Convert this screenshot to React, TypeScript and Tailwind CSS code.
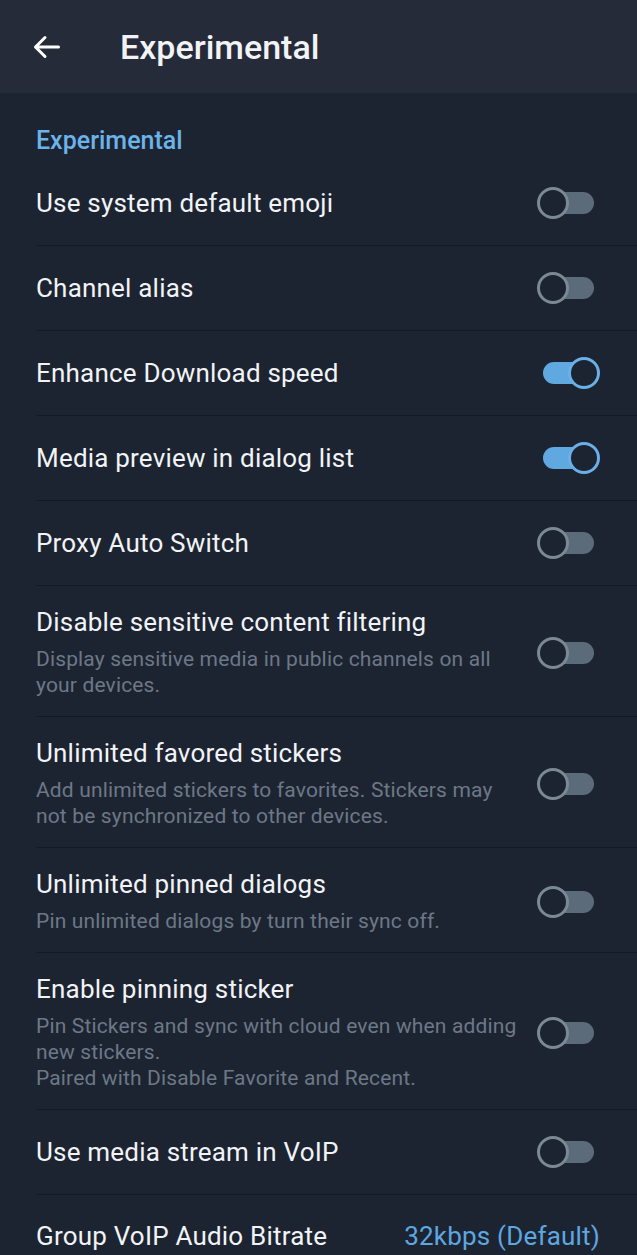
import React, { useState } from 'react';

type Item = {
  title: string;
  sub?: string[];
  on?: boolean;
};

// subtitle lines are kept as the app wraps them
const ITEMS: Item[] = [
  { title: "Use system default emoji" },
  { title: "Channel alias" },
  { title: "Enhance Download speed", on: true },
  { title: "Media preview in dialog list", on: true },
  { title: "Proxy Auto Switch" },
  {
    title: "Disable sensitive content filtering",
    sub: ["Display sensitive media in public channels on all", "your devices."],
  },
  {
    title: "Unlimited favored stickers",
    sub: ["Add unlimited stickers to favorites. Stickers may", "not be synchronized to other devices."],
  },
  {
    title: "Unlimited pinned dialogs",
    sub: ["Pin unlimited dialogs by turn their sync off."],
  },
  {
    title: "Enable pinning sticker",
    sub: [
      "Pin Stickers and sync with cloud even when adding",
      "new stickers.",
      "Paired with Disable Favorite and Recent.",
    ],
  },
  { title: "Use media stream in VoIP" },
];

function Toggle({ on, onClick }: { on: boolean; onClick: () => void }) {
  return (
    <button onClick={onClick} className="relative w-[63px] h-[32px] shrink-0">
      {on ? (
        <>
          <span className="absolute left-[6px] top-[5px] w-[46px] h-[22px] rounded-full bg-[#5fa8e0]" />
          <span className="absolute left-[31px] top-0 w-[32px] h-[32px] rounded-full border-[3px] border-[#6ab0e8] bg-[#1d2431]" />
        </>
      ) : (
        <>
          <span className="absolute left-[12px] top-[5px] w-[45px] h-[22px] rounded-full bg-[#5b6b7a]" />
          <span className="absolute left-0 top-0 w-[32px] h-[32px] rounded-full border-[3px] border-[#7b8996] bg-[#1d2431]" />
        </>
      )}
    </button>
  );
}

export default function App() {
  const [state, setState] = useState(ITEMS.map(i => !!i.on));

  const flip = (idx: number) => setState(s => s.map((v, i) => (i === idx ? !v : v)));

  return (
    <div className="min-h-screen bg-[#1d2431] text-[#f1f3f6]" style={{ fontFamily: 'Roboto, "Noto Sans", sans-serif' }}>
      <header className="h-[93px] bg-[#252b38] flex items-center">
        <button className="ml-[33px] w-[27px] h-[24px]">
          <svg width="27" height="24" viewBox="0 0 27 24" fill="none" stroke="white" strokeWidth="3" strokeLinecap="round" strokeLinejoin="round">
            <path d="M25.5 12H2.5M12 2.5L2.5 12L12 21.5" />
          </svg>
        </button>
        <h1 className="ml-[60px] text-[34px] font-medium leading-none">Experimental</h1>
      </header>

      <div className="pl-[36px] pt-[33px] pb-[5px] text-[25px] leading-[30px] font-medium text-[#6cb3ea]">Experimental</div>

      {ITEMS.map((item, idx) => (
        <div key={item.title} className="pl-[36px]">
          <div className={`flex items-center pr-[37px] ${item.sub ? 'pt-[21px] pb-[18px]' : 'py-[26px]'}`}>
            <div className="flex-1 min-w-0 pr-[14px]">
              <div className="text-[26px] leading-[30px] tracking-[0.2px]">{item.title}</div>
              {item.sub && (
                <div className="mt-[9px] text-[21px] leading-[26px] tracking-[0.15px] text-[#6c7887] whitespace-nowrap">
                  {item.sub.map(line => (
                    <div key={line}>{line}</div>
                  ))}
                </div>
              )}
            </div>
            <Toggle on={state[idx]} onClick={() => flip(idx)} />
          </div>
          <div className="h-px bg-[#141a23]" />
        </div>
      ))}

      <div className="pl-[36px] pr-[37px] py-[26px] flex items-center justify-between">
        <span className="text-[26px] leading-[30px] tracking-[0.2px]">Group VoIP Audio Bitrate</span>
        <span className="text-[26px] leading-[30px] tracking-[0.2px] text-[#5ea7e0]">32kbps (Default)</span>
      </div>
    </div>
  );
}
